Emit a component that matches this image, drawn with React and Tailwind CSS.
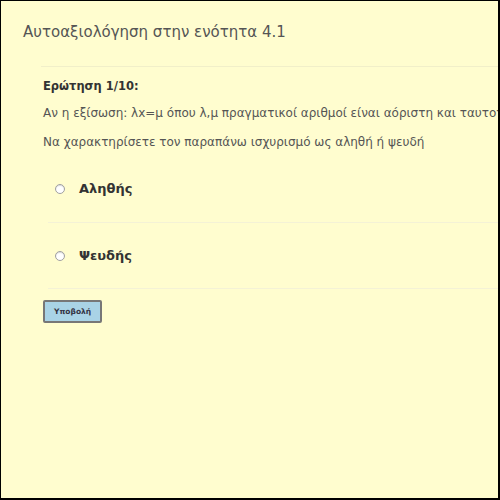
import React from 'react';

const Option = ({ label, height }) => (
  <label className={`flex items-center ${height}`}>
    <span className="ml-[12px] w-[10px] h-[10px] rounded-full border border-[#a0a0a0] bg-white shadow-[inset_0_1px_1px_rgba(0,0,0,0.15)]" />
    <span className="ml-[14px] text-[13px] font-bold text-[#333]">{label}</span>
  </label>
);

const App = () => {
  return (
    <div
      className="w-[500px] h-[500px] overflow-hidden bg-[#fffdcf] border-black border-t border-l border-r-2 border-b-2 whitespace-nowrap"
      style={{ fontFamily: '"DejaVu Sans", Verdana, sans-serif' }}
    >
      <div className="h-[65px] pl-[22px] pt-[21px] text-[15px] leading-[20px] text-[#555]">
        Αυτοαξιολόγηση στην ενότητα 4.1
      </div>
      <div className="ml-[40px] border-t border-[#f1efc9]" />

      <div className="ml-[42px]">
        <div className="mt-[11px] text-[11.5px] leading-[16px] font-bold text-[#333]">Ερώτηση 1/10:</div>
        <p className="text-[12px] leading-[38px] text-[#555]">
          Αν η εξίσωση: λx=μ όπου λ,μ πραγματικοί αριθμοί είναι αόριστη και ταυτοτική τότε λ=0 και μ=0
        </p>
        <p className="text-[12px] leading-[20px] text-[#555]">
          Να χαρακτηρίσετε τον παραπάνω ισχυρισμό ως αληθή ή ψευδή
        </p>

        <Option label="Αληθής" height="h-[70px] pt-[4px]" />
        <div className="ml-[5px] border-t border-[#f4f2d6]" />
        <Option label="Ψευδής" height="h-[65px]" />
        <div className="ml-[5px] border-t border-[#f4f2d6]" />

        <button className="mt-[11px] h-[23px] px-[9px] bg-[#a9d3e6] border-2 border-[#777] rounded-[2px] text-[7.5px] font-bold text-[#334]">
          Υποβολή
        </button>
      </div>
    </div>
  );
};

export default App;
